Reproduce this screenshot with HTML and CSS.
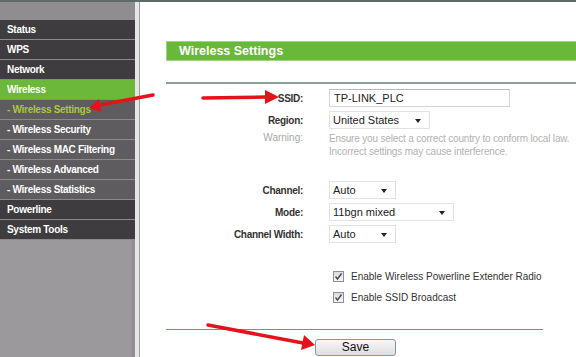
FILE: index.html
```html
<!DOCTYPE html>
<html lang="en">
<head>
    <meta charset="UTF-8">
    <meta name="viewport" content="width=device-width, initial-scale=1.0">
    <title>Wireless Settings</title>
    <link rel="stylesheet" href="styles.css">
</head>
<body>
    <!-- left menu -->
    <div class="sidebar">
        <div class="menutop"></div>
        <div class="item">Status</div>
        <div class="item">WPS</div>
        <div class="item">Network</div>
        <div class="item active">Wireless</div>
        <div class="item sub current">- Wireless Settings</div>
        <div class="item sub">- Wireless Security</div>
        <div class="item sub">- Wireless MAC Filtering</div>
        <div class="item sub">- Wireless Advanced</div>
        <div class="item sub">- Wireless Statistics</div>
        <div class="item">Powerline</div>
        <div class="item">System Tools</div>
        <div class="menurest"></div>
    </div>
    <div class="gap"></div>

    <!-- main panel -->
    <div class="main">
        <div class="header">Wireless Settings</div>
        <div class="rule"></div>

        <div class="form">
            <div class="row">
                <div class="label">SSID:</div>
                <div class="field"><div class="textbox">TP-LINK_PLC</div></div>
            </div>
            <div class="row">
                <div class="label">Region:</div>
                <div class="field"><div class="select w-region">United States<span class="caret"></span></div></div>
            </div>
            <div class="row warn">
                <div class="label">Warning:</div>
                <div class="field">Ensure you select a correct country to conform local law.<br>Incorrect settings may cause interference.</div>
            </div>

            <div class="row first">
                <div class="label">Channel:</div>
                <div class="field"><div class="select w-small">Auto<span class="caret"></span></div></div>
            </div>
            <div class="row">
                <div class="label">Mode:</div>
                <div class="field"><div class="select w-mode">11bgn mixed<span class="caret"></span></div></div>
            </div>
            <div class="row">
                <div class="label">Channel Width:</div>
                <div class="field"><div class="select w-small">Auto<span class="caret"></span></div></div>
            </div>

            <div class="row check first">
                <div class="label"></div>
                <div class="field"><span class="box"><svg width="9" height="9" viewBox="0 0 9 9"><path d="M1.5 4.5 L3.5 7 L7.5 1.5" fill="none" stroke="#4a4a4a" stroke-width="1.4"/></svg></span>Enable Wireless Powerline Extender Radio</div>
            </div>
            <div class="row check">
                <div class="label"></div>
                <div class="field"><span class="box"><svg width="9" height="9" viewBox="0 0 9 9"><path d="M1.5 4.5 L3.5 7 L7.5 1.5" fill="none" stroke="#4a4a4a" stroke-width="1.4"/></svg></span>Enable SSID Broadcast</div>
            </div>
        </div>

        <div class="rule short"></div>
        <div class="buttons">
            <button class="save">Save</button>
        </div>
    </div>

    <!-- red annotation arrows drawn over the screenshot -->
    <svg class="arrows" width="576" height="357" viewBox="0 0 576 357">
        <g stroke="#e5121a" stroke-width="3.5" stroke-linecap="round">
            <line x1="153" y1="95" x2="100" y2="105"/>
            <line x1="203" y1="98" x2="266" y2="97"/>
            <line x1="208" y1="325" x2="303" y2="343"/>
        </g>
        <g fill="#e5121a">
            <polygon points="89,108 101,112 99,99"/>
            <polygon points="279,97 265,90 265,104"/>
            <polygon points="315,345 301,350 304,335"/>
        </g>
    </svg>
</body>
</html>
```

FILE: styles.css
```css
*{
    margin: 0px;
    padding: 0px;
    box-sizing: border-box;
}
body{
    display: flex;
    height: 357px;
    overflow: hidden;
    background: #ffffff;
    border-top: 2px solid #5c6b66;
    font-family: "Liberation Sans", Arial, sans-serif;
    position: relative;
}

/* sidebar */
.sidebar{
    width: 135px;
    flex-shrink: 0;
    background: #9b999b;
    display: flex;
    flex-direction: column;
}
.menutop{
    height: 18px;
    background: #8f8d8f;
}
.menurest{
    flex: 1;
    border-right: 4px solid #918f91;
}
.item{
    height: 20px;
    line-height: 19px;
    border-bottom: 1px solid #8b898b;
    background: #3e3c3e;
    color: #ffffff;
    font-size: 10px;
    font-weight: bold;
    letter-spacing: -0.3px;
    padding-left: 7px;
    white-space: nowrap;
}
.item.active{
    background: #6bb83b;
}
.item.sub{
    background: #5e5c5e;
}
.item.current{
    color: #a8c83e;
}
.gap{
    width: 5px;
    flex-shrink: 0;
    background: #e6e6e6;
    border-right: 1px solid #9c9c9c;
}

/* main panel */
.main{
    flex: 1;
    padding-top: 39px;
    padding-left: 26px;
}
.header{
    height: 20px;
    line-height: 18px;
    background: #68b83a;
    border: 1px solid #9fd57c;
    border-right: none;
    color: #ffffff;
    font-size: 12.5px;
    font-weight: bold;
    padding-left: 12px;
}
.rule{
    height: 2px;
    background: #8aa398;
    margin-top: 21px;
}
.rule.short{
    width: 377px;
    margin-top: 0px;
    height: 1px;
    background: #6f9a80;
}

.form{
    padding-top: 3px;
    padding-bottom: 21px;
}
.row{
    display: flex;
    align-items: center;
    height: 22px;
}
.row.first{
    margin-top: 21px;
}
.label{
    width: 137px;
    text-align: right;
    font-size: 10px;
    font-weight: bold;
    letter-spacing: -0.3px;
    color: #333333;
}
.field{
    margin-left: 26px;
    font-size: 11px;
    color: #222222;
    display: flex;
    align-items: center;
}
.row.warn{
    height: 27px;
    align-items: flex-start;
    padding-top: 1px;
}
.row.warn .label{
    color: #a8a8a8;
    font-weight: normal;
    letter-spacing: 0px;
}
.row.warn .field{
    display: block;
    font-size: 10px;
    line-height: 13px;
    letter-spacing: -0.17px;
    white-space: nowrap;
    color: #b2b2b2;
}
.textbox{
    width: 181px;
    height: 18px;
    line-height: 16px;
    border: 1px solid #d4d4d4;
    border-top-color: #b8b8b8;
    padding-left: 4px;
}
.select{
    position: relative;
    height: 18px;
    line-height: 16px;
    border: 1px solid #e2e2e2;
    padding-left: 3px;
}
.w-region{
    width: 101px;
}
.w-small{
    width: 67px;
}
.w-mode{
    width: 125px;
}
.caret{
    position: absolute;
    right: 8px;
    top: 7px;
    border-left: 3px solid transparent;
    border-right: 3px solid transparent;
    border-top: 4px solid #222222;
}
.row.check{
    height: 21px;
}
.row.check .field{
    margin-left: 30px;
    font-size: 10px;
    color: #333333;
}
.box{
    width: 11px;
    height: 11px;
    border: 1px solid #8c8f93;
    background: linear-gradient(#dcdcdc, #f6f6f6);
    margin-right: 7px;
    display: flex;
    align-items: center;
    justify-content: center;
}

.buttons{
    padding-top: 7px;
    padding-left: 149px;
}
.save{
    width: 81px;
    height: 17px;
    border: 1px solid #7d98b3;
    border-radius: 3px;
    background: linear-gradient(#f7f7f7, #dedede);
    font-family: "Liberation Sans", Arial, sans-serif;
    font-size: 12px;
    color: #111111;
}

.arrows{
    position: absolute;
    left: 0px;
    top: -2px;
    pointer-events: none;
}
```
